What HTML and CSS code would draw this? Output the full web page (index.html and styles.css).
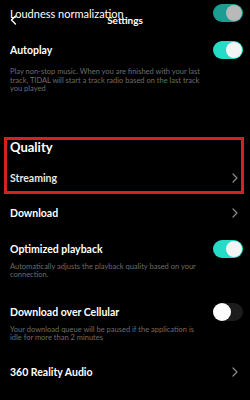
FILE: index.html
```html
<!DOCTYPE html>
<html lang="en">
<head>
    <meta charset="UTF-8">
    <meta name="viewport" content="width=device-width, initial-scale=1.0">
    <title>Settings</title>
    <link rel="stylesheet" href="styles.css">
</head>
<body>
    <div class="screen">
        <header class="topbar">
            <svg class="back" width="7" height="10" viewBox="0 0 7 10">
                <path d="M5.5 1 L1.5 5 L5.5 9" fill="none" stroke="#fff" stroke-width="1.4" stroke-linecap="round" stroke-linejoin="round"/>
            </svg>
            <span class="topbar-title">Settings</span>
        </header>

        <div class="row row-loudness">
            <span class="label label-light">Loudness normalization</span>
            <span class="toggle toggle-dim"><span class="knob"></span></span>
        </div>

        <div class="row row-autoplay">
            <span class="label">Autoplay</span>
            <span class="toggle"><span class="knob"></span></span>
        </div>
        <p class="desc">Play non-stop music. When you are finished with your last track, TIDAL will start a track radio based on the last track you played</p>

        <section class="quality-box">
            <h2 class="section-title">Quality</h2>
            <div class="row row-streaming">
                <span class="label label-soft">Streaming</span>
                <svg class="chev" width="6" height="10" viewBox="0 0 6 10">
                    <path d="M1 1 L5 5 L1 9" fill="none" stroke="#8a8a8a" stroke-width="1.2" stroke-linecap="round" stroke-linejoin="round"/>
                </svg>
            </div>
        </section>

        <div class="row row-download">
            <span class="label">Download</span>
            <svg class="chev" width="6" height="10" viewBox="0 0 6 10">
                <path d="M1 1 L5 5 L1 9" fill="none" stroke="#8a8a8a" stroke-width="1.2" stroke-linecap="round" stroke-linejoin="round"/>
            </svg>
        </div>

        <div class="row row-optimized">
            <span class="label">Optimized playback</span>
            <span class="toggle"><span class="knob"></span></span>
        </div>
        <p class="desc">Automatically adjusts the playback quality based on your connection.</p>

        <div class="row row-cellular">
            <span class="label">Download over Cellular</span>
            <span class="toggle toggle-off"><span class="knob"></span></span>
        </div>
        <p class="desc desc-narrow">Your download queue will be paused if the application is idle for more than 2 minutes</p>

        <div class="row row-360">
            <span class="label">360 Reality Audio</span>
            <svg class="chev" width="6" height="10" viewBox="0 0 6 10">
                <path d="M1 1 L5 5 L1 9" fill="none" stroke="#8a8a8a" stroke-width="1.2" stroke-linecap="round" stroke-linejoin="round"/>
            </svg>
        </div>
    </div>
</body>
</html>
```

FILE: styles.css
```css
* {
    box-sizing: border-box;
}
body {
    margin: 0;
    background-color: #000;
    font-family: Lato, "Open Sans", Arial, sans-serif;
    color: #fff;
}
.screen {
    position: relative;
    width: 250px;
    height: 400px;
    overflow: hidden;
    background-color: #000;
}
.topbar {
    position: absolute;
    top: 0;
    left: 0;
    width: 250px;
    height: 30px;
}
.back {
    position: absolute;
    left: 10px;
    top: 15px;
}
.topbar-title {
    position: absolute;
    left: 0;
    right: 0;
    top: 14px;
    text-align: center;
    font-size: 10px;
    font-weight: 700;
    line-height: 12px;
}
.row {
    display: flex;
    align-items: center;
    justify-content: space-between;
    padding: 0 7px 0 10px;
}
.label {
    font-size: 10.5px;
    font-weight: 700;
    white-space: nowrap;
}
.label-light {
    font-weight: 400;
    font-size: 11px;
}
.label-soft {
    color: #e6e6e6;
}
.chev {
    margin-right: 5px;
}
.toggle {
    display: flex;
    align-items: center;
    justify-content: flex-end;
    width: 30px;
    height: 18px;
    padding: 1px;
    border-radius: 9px;
    background-color: #25dcc6;
}
.toggle .knob {
    width: 16px;
    height: 16px;
    border-radius: 50%;
    background-color: #f4f4f4;
}
.toggle-dim {
    background-color: #1b9e91;
}
.toggle-dim .knob {
    background-color: #b9b9b9;
}
.toggle-off {
    justify-content: flex-start;
    background-color: #1c1c1c;
    padding: 0;
}
.toggle-off .knob {
    width: 18px;
    height: 18px;
    background-color: #fff;
}
.desc {
    margin: 0;
    padding: 0 41px 0 10px;
    font-size: 7.5px;
    line-height: 8.5px;
    color: #6c6c6c;
}
.desc-narrow {
    padding-right: 46px;
}
.row-loudness {
    height: 26px;
}
.row-autoplay {
    margin-top: 6px;
    height: 36px;
}
.quality-box {
    margin: 43px 6px 0 4px;
    height: 57px;
    border: 3px solid #d42222;
    padding: 0 0 0 3px;
}
.section-title {
    margin: 0;
    height: 15px;
    font-size: 13px;
    font-weight: 700;
    line-height: 15px;
}
.quality-box .row {
    padding: 0;
}
.row-streaming {
    margin-top: 11px;
    height: 25px;
}
.row-streaming .chev {
    margin-right: 3px;
}
.row-download {
    margin-top: 6px;
    height: 26px;
    padding-right: 7px;
}
.row-optimized {
    margin-top: 9px;
    height: 28px;
}
.row-cellular {
    margin-top: 18px;
    height: 28px;
}
.row-360 {
    margin-top: 16px;
    height: 26px;
}
```
